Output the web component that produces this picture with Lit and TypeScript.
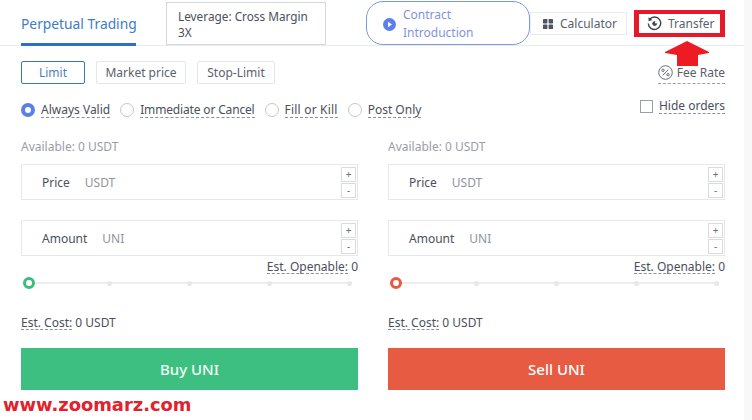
import { LitElement, html, css } from "lit";
import { customElement } from "lit/decorators.js";

@customElement("app-root")
export class AppRoot extends LitElement {
  static styles = css`
    :host { display: block; width: 752px; height: 420px; position: relative; overflow: hidden; background: #fff;
      font-family: "Noto Sans", "Open Sans", sans-serif; font-size: 12px; color: #4a4f5c; }
    .strip { position: absolute; top: 0; bottom: 0; right: 0; width: 8px; background: #f8f8f9; }
    .page { width: 744px; height: 420px; box-sizing: border-box; display: flex; flex-direction: column; }
    .head { height: 46px; box-sizing: border-box; border-bottom: 1px solid #e8ecf2; display: flex; align-items: flex-end; padding-left: 21px; }
    .tab { width: 115px; height: 46px; box-sizing: border-box; border-bottom: 3px solid #2b6fc6; margin-bottom: -1px; color: #3d7cc9; font-size: 13.8px; line-height: 48px; white-space: nowrap; }
    .lev { margin-left: 30px; width: 160px; height: 43px; box-sizing: border-box; border: 1px solid #d4d7de; padding: 0 11px; font-size: 11.8px; line-height: 16px; display: flex; flex-direction: column; justify-content: center; color: #4a4f5c; background: #fff; }
    .pill { margin-left: 40px; width: 164px; height: 44px; box-sizing: border-box; border: 1px solid #7d9ad6; border-radius: 17px; display: flex; align-items: center; padding: 2px 0 0 16px; gap: 7px; color: #7f93e0; line-height: 18px; }
    .calc { width: 97px; height: 23px; margin-bottom: 10px; box-sizing: border-box; border: 1px solid #e8ecf2; display: flex; align-items: center; padding-left: 12px; gap: 7px; color: #5a5f6b; }
    .trans { margin-left: 12px; width: 85px; height: 23px; margin-bottom: 10px; display: flex; align-items: center; padding-left: 8px; gap: 6px; color: #5a5f6b; }
    .orders { display: flex; justify-content: space-between; padding: 15px 19px 0 21px; height: 24px; }
    .obtns { display: flex; gap: 11px; }
    .ob { height: 23px; box-sizing: border-box; border: 1px solid #e3e6ec; border-radius: 2px; display: flex; align-items: center; justify-content: center; color: #5a5f6b; }
    .ob.on { border-color: #3677b5; color: #4d7fb8; }
    .w64 { width: 64px; }
    .w90 { width: 90px; }
    .w78 { width: 78px; }
    .fee { display: flex; align-items: center; gap: 4px; height: 21px; padding-top: 4px; border-bottom: 1px dashed #9a9ea8; margin-top: -3px; color: #5a5f6b; }
    .opts { display: flex; justify-content: space-between; padding: 14px 19px 0 21px; height: 22px; }
    .radios { display: flex; gap: 10px; }
    .r { display: flex; gap: 6px; align-items: center; }
    .dot { width: 14px; height: 14px; box-sizing: border-box; border-radius: 50%; border: 1px solid #c4c7cf; }
    .dot.on { border: 4px solid #5a80e6; background: #fff; }
    .dash { border-bottom: 1px dashed #8a8e98; line-height: 15px; color: #4a4f5c; white-space: nowrap; }
    .tight { letter-spacing: -0.16px; }
    .loose { letter-spacing: 0.2px; }
    .hide { display: flex; gap: 6px; align-items: center; margin-top: -4px; height: 22px; }
    .box { width: 13px; height: 13px; box-sizing: border-box; border: 1px solid #9a9ea8; }
    .cols { display: flex; gap: 30px; padding: 0 19px 0 21px; margin-top: 17px; }
    .col { width: 337px; display: flex; flex-direction: column; }
    .avail { height: 18px; line-height: 18px; color: #9a9ea8; margin-bottom: 8px; }
    .field { height: 36px; box-sizing: border-box; border: 1px solid #e6e8ee; display: flex; align-items: center; padding-left: 20px; }
    .field + .field { margin-top: 20px; }
    .lab { color: #4a4f5c; margin-right: 15px; }
    .unit { color: #8f939d; }
    .step { margin-left: auto; margin-right: 1px; display: flex; flex-direction: column; gap: 1px; }
    .step span { width: 15px; height: 15px; box-sizing: border-box; border: 1px solid #d8dbe2; font-size: 10px; line-height: 13px; text-align: center; color: #6a6e78; }
    .open { text-align: right; height: 14px; line-height: 14px; margin-top: 4px; color: #4a4f5c; }
    .open .dash { display: inline-block; line-height: 12px; }
    .slider { height: 14px; margin-top: 2px; display: flex; align-items: center; gap: 75px; padding-left: 2px; background: linear-gradient(#eceef2, #eceef2) center / 100% 2px no-repeat; background-origin: content-box; margin-right: 6px; }
    .thumb { width: 12px; height: 12px; box-sizing: border-box; border-radius: 50%; border: 3px solid #3dbd7d; background: #fff; margin-right: -3.5px; }
    .thumb.red { border-color: #e65a43; }
    .tick { width: 5px; height: 5px; border-radius: 50%; background: #e6e8ee; }
    .cost { margin-top: 26px; height: 18px; line-height: 14px; color: #4a4f5c; }
    .cost .dash { display: inline-block; line-height: 12px; }
    .act { margin-top: 14px; height: 42px; color: #f4fff8; font: 500 15px "Noto Sans", sans-serif; display: flex; align-items: center; justify-content: center; }
    .buy { background: #3cbf80; }
    .sell { background: #e65b42; color: #fff; }
    .mark { margin: 3px 0 0 3px; color: #e3202c; font: bold 17.9px "DejaVu Sans", sans-serif; line-height: 24px; }
    .hl { position: absolute; left: 634px; top: 10px; width: 91px; height: 27px; box-sizing: border-box; border-style: solid; border-width: 4px 5px; border-color: #e6192b; }
    .arrow { position: absolute; left: 664px; top: 40px; }
  `;

  private field(label: string, unit: string) {
    return html`<div class="field"><span class="lab">${label}</span><span class="unit">${unit}</span>
      <div class="step"><span>+</span><span>-</span></div></div>`;
  }

  private col(kind: "buy" | "sell", label: string) {
    return html`<div class="col">
      <div class="avail">Available: 0 USDT</div>
      ${this.field("Price", "USDT")}
      ${this.field("Amount", "UNI")}
      <div class="open"><span class="dash">Est. Openable:</span> 0</div>
      <div class="slider">
        <span class="thumb ${kind === "sell" ? "red" : ""}"></span>
        <span class="tick"></span><span class="tick"></span><span class="tick"></span><span class="tick"></span>
      </div>
      <div class="cost"><span class="dash">Est. Cost:</span> 0 USDT</div>
      <div class="act ${kind}">${label}</div>
    </div>`;
  }

  render() {
    return html`
      <div class="strip"></div>
      <div class="page">
        <div class="head">
          <div class="tab">Perpetual Trading</div>
          <div class="lev"><div>Leverage: Cross Margin</div><div>3X</div></div>
          <div class="pill">
            <svg width="13" height="13" viewBox="0 0 13 13">
              <circle cx="6.5" cy="6.5" r="6.5" fill="#5b7ff0"/><path d="M5 3.8 9 6.5 5 9.2z" fill="#fff"/>
            </svg>
            <div>Contract<br />Introduction</div>
          </div>
          <div class="calc">
            <svg width="10" height="10" viewBox="0 0 10 10" fill="#4f5561">
              <rect width="4.4" height="4.4" rx=".6"/><rect x="5.6" width="4.4" height="4.4" rx=".6"/>
              <rect y="5.6" width="4.4" height="4.4" rx=".6"/><rect x="5.6" y="5.6" width="4.4" height="4.4" rx=".6"/>
            </svg>
            Calculator
          </div>
          <div class="trans">
            <svg width="15" height="15" viewBox="0 0 15 15" fill="none" stroke="#3e4450" stroke-width="1.4">
              <path d="M2.6 3.4A6.2 6.2 0 1 1 1.3 7.5"/>
              <path d="M1.5 1.2 1.6 5.2 5.4 4z" fill="#3e4450" stroke="none"/>
              <circle cx="7.7" cy="7.6" r="2.4" fill="#3e4450" stroke="none"/>
              <circle cx="9" cy="6.4" r="1.1" fill="#fff" stroke="none"/>
            </svg>
            Transfer
          </div>
        </div>
        <div class="orders">
          <div class="obtns">
            <div class="ob on w64">Limit</div>
            <div class="ob w90">Market price</div>
            <div class="ob w78">Stop-Limit</div>
          </div>
          <div class="fee">
            <svg width="15" height="15" viewBox="0 0 15 15" fill="none" stroke="#6a6e78">
              <circle cx="7.5" cy="7.5" r="6.8"/><path d="M10.2 4.6 4.8 10.4"/>
              <circle cx="5" cy="5.3" r="1.2"/><circle cx="10" cy="9.7" r="1.2"/>
            </svg>
            Fee Rate
          </div>
        </div>
        <div class="opts">
          <div class="radios">
            <div class="r"><span class="dot on"></span><span class="dash">Always Valid</span></div>
            <div class="r"><span class="dot"></span><span class="dash tight">Immediate or Cancel</span></div>
            <div class="r"><span class="dot"></span><span class="dash loose">Fill or Kill</span></div>
            <div class="r"><span class="dot"></span><span class="dash">Post Only</span></div>
          </div>
          <div class="hide"><span class="box"></span><span class="dash">Hide orders</span></div>
        </div>
        <div class="cols">
          ${this.col("buy", "Buy UNI")}
          ${this.col("sell", "Sell UNI")}
        </div>
        <div class="mark">www.zoomarz.com</div>
      </div>
      <div class="hl"></div>
      <svg class="arrow" width="46" height="27" viewBox="0 0 46 27">
        <path d="M23 1 45 12 45 13 34 15 34 26 13 26 13 15 1 13 1 12z" fill="#ed1c24"/>
      </svg>
    `;
  }
}
